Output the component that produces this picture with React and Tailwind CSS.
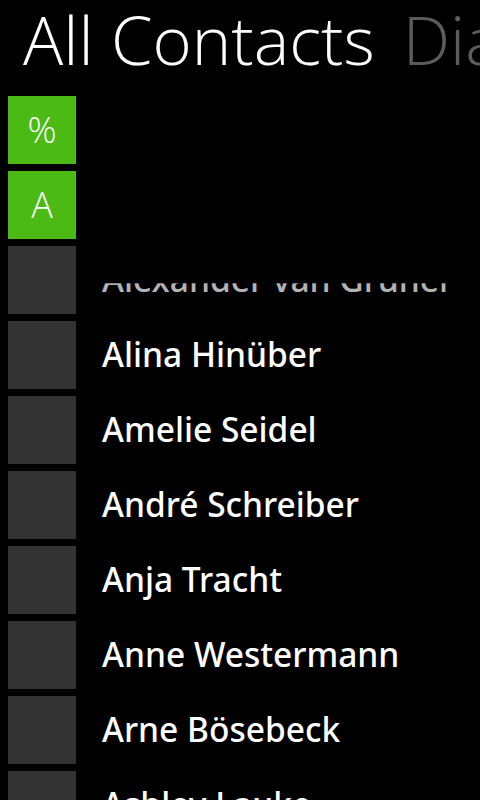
import React from "react";

const names = [
  { t: "%", green: true },
  { t: "A", green: true },
  { n: "Alexander van Grüner", glitch: true },
  { n: "Alina Hinüber" },
  { n: "Amelie Seidel" },
  { n: "André Schreiber" },
  { n: "Anja Tracht" },
  { n: "Anne Westermann" },
  { n: "Arne Bösebeck" },
  { n: "Ashley Lauke" },
];

export default function App() {
  return (
    <div className="w-[480px] h-[800px] bg-black overflow-hidden text-white">
      <div
        className="flex whitespace-nowrap overflow-hidden pl-[23px] h-[96px] items-start"
        style={{ fontFamily: "'Open Sans', 'Noto Sans', sans-serif" }}
      >
        <span className="text-[67px] font-light leading-none mt-[6px] text-white">All Contacts</span>
        <span className="text-[67px] font-light leading-none mt-[6px] ml-[28px] text-[#5c5c5c]">Dial</span>
      </div>
      <div className="flex flex-col gap-[7px] pl-[8px]">
        {names.map((r, i) => (
          <div key={i} className="flex items-center h-[68px]">
            <div
              className={
                "w-[68px] h-[68px] shrink-0 flex items-center justify-center " +
                (r.green ? "bg-[#4cba14]" : "bg-[#333333]")
              }
            >
              {r.t && (
                <span
                  className="text-[36px] font-light text-white leading-none"
                  style={{ fontFamily: "'Open Sans', 'Noto Sans', sans-serif" }}
                >
                  {r.t}
                </span>
              )}
            </div>
            {r.n && (
              <span
                className={
                  "ml-[26px] text-[33.5px] font-medium whitespace-nowrap leading-none text-white " +
                  (r.glitch ? "[clip-path:inset(60%_0_10%_0)] opacity-70" : "")
                }
                style={{ fontFamily: "'Noto Sans', 'Open Sans', sans-serif" }}
              >
                {r.n}
              </span>
            )}
          </div>
        ))}
      </div>
    </div>
  );
}
